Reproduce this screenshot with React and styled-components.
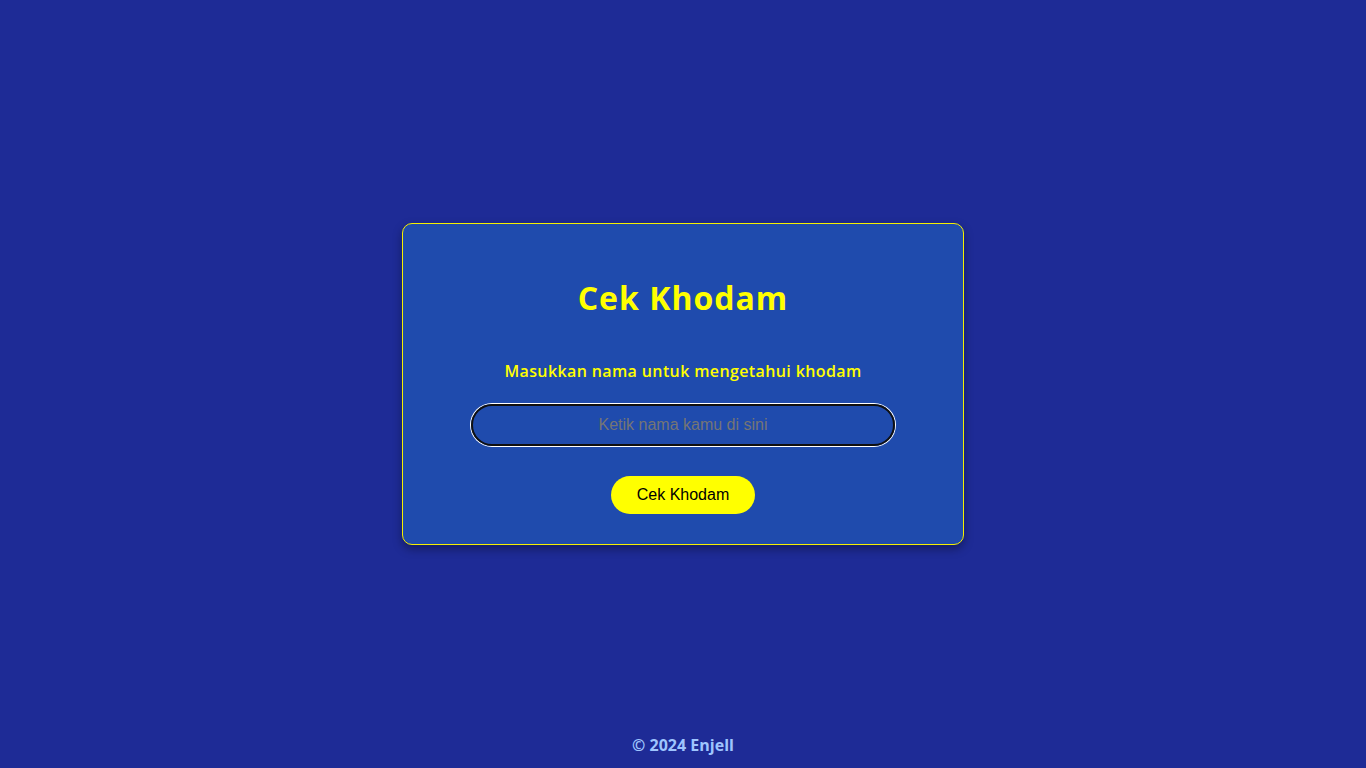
import React from "react";
import styled, { createGlobalStyle } from "styled-components";

const Global = createGlobalStyle`
  html, body { margin: 0; padding: 0; }
  body {
    background: #1e2b96;
    font-family: "Open Sans", "Liberation Sans", sans-serif;
  }
  * { box-sizing: border-box; }
`;

const Page = styled.div`
  min-height: 100vh;
  display: grid;
  grid-template-rows: 1fr auto 1fr;
  justify-items: center;
`;

const Card = styled.section`
  grid-row: 2;
  width: 562px;
  background: #1f4bad;
  border: 1px solid #f5f000;
  border-radius: 10px;
  box-shadow: 0 4px 10px rgba(0, 0, 0, 0.35);
  padding: 50px 30px 30px;
  display: flex;
  flex-direction: column;
  align-items: center;
`;

const Title = styled.h1`
  margin: 0;
  font-family: "Open Sans", sans-serif;
  font-weight: 700;
  font-size: 32px;
  line-height: 48px;
  letter-spacing: 1px;
  color: #ffff00;
`;

const Subtitle = styled.p`
  margin: 37px 0 0;
  font-family: "Open Sans", sans-serif;
  font-weight: 600;
  font-size: 16px;
  line-height: 24px;
  letter-spacing: 0.38px;
  color: #ffff00;
`;

const Input = styled.input`
  margin-top: 21px;
  width: 424px;
  height: 42px;
  border-radius: 21px;
  border: 2px solid #101010;
  box-shadow: 0 0 0 1px #ffffff;
  outline: none;
  background: transparent;
  text-align: center;
  font-family: "Liberation Sans", Arial, sans-serif;
  font-size: 16px;
  color: #ffffff;
  caret-color: #ffffff;
  &::placeholder { color: #757575; }
`;

const Button = styled.button`
  margin-top: 30px;
  height: 38px;
  padding: 0 26px;
  border: none;
  border-radius: 19px;
  background: #ffff00;
  color: #000;
  font-family: "Liberation Sans", Arial, sans-serif;
  font-size: 16px;
  cursor: pointer;
`;

const Footer = styled.footer`
  grid-row: 3;
  align-self: end;
  padding-bottom: 12px;
  font-family: "Open Sans", sans-serif;
  font-weight: 700;
  font-size: 16px;
  color: #9ec5fe;
`;

export default function App() {
  return (
    <>
      <Global />
      <Page>
        <Card>
          <Title>Cek Khodam</Title>
          <Subtitle>Masukkan nama untuk mengetahui khodam</Subtitle>
          <Input type="text" placeholder="Ketik nama kamu di sini" />
          <Button>Cek Khodam</Button>
        </Card>
        <Footer>© 2024 Enjell</Footer>
      </Page>
    </>
  );
}
